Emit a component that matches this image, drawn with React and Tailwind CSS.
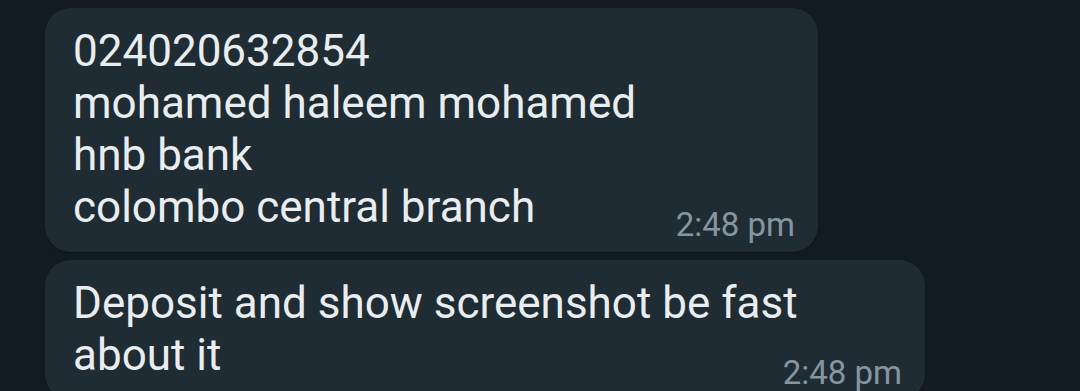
import React from 'react'

const Bubble = ({ lines, time, width }) => {
  return (
    <div className={`${width} ml-[45px] bg-[#202c33] rounded-[26px] pl-[28px] pr-[23px] pt-[17px] pb-[7px] shadow-[0_1px_1px_rgba(0,0,0,0.25)]`}>
      <div className="text-[44px] leading-[52px] text-[#e9edef]">
        {lines.map((l, i) => (
          <div key={i}>{l}</div>
        ))}
      </div>
      <div className="flex justify-end -mt-[28px]">
        <span className="text-[33px] leading-[40px] text-[#8696a0]">{time}</span>
      </div>
    </div>
  )
}

const App = () => {
  return (
    <div className="w-[1080px] h-[391px] overflow-hidden bg-[#111b21] flex flex-col" style={{ fontFamily: 'Roboto, "Noto Sans", sans-serif' }}>
      <div className="ml-[69px] w-[802px] h-[2px] bg-[#1a252c] rounded-b-[4px] shadow-[0_1px_1px_rgba(0,0,0,0.3)]" />
      <div className="mt-[8px]">
        <Bubble
          width="w-[773px]"
          time="2:48 pm"
          lines={['024020632854', 'mohamed haleem mohamed', 'hnb bank', 'colombo central branch']}
        />
      </div>
      <div className="mt-[8px]">
        <Bubble
          width="w-[880px]"
          time="2:48 pm"
          lines={['Deposit and show screenshot be fast', 'about it']}
        />
      </div>
    </div>
  )
}

export default App
